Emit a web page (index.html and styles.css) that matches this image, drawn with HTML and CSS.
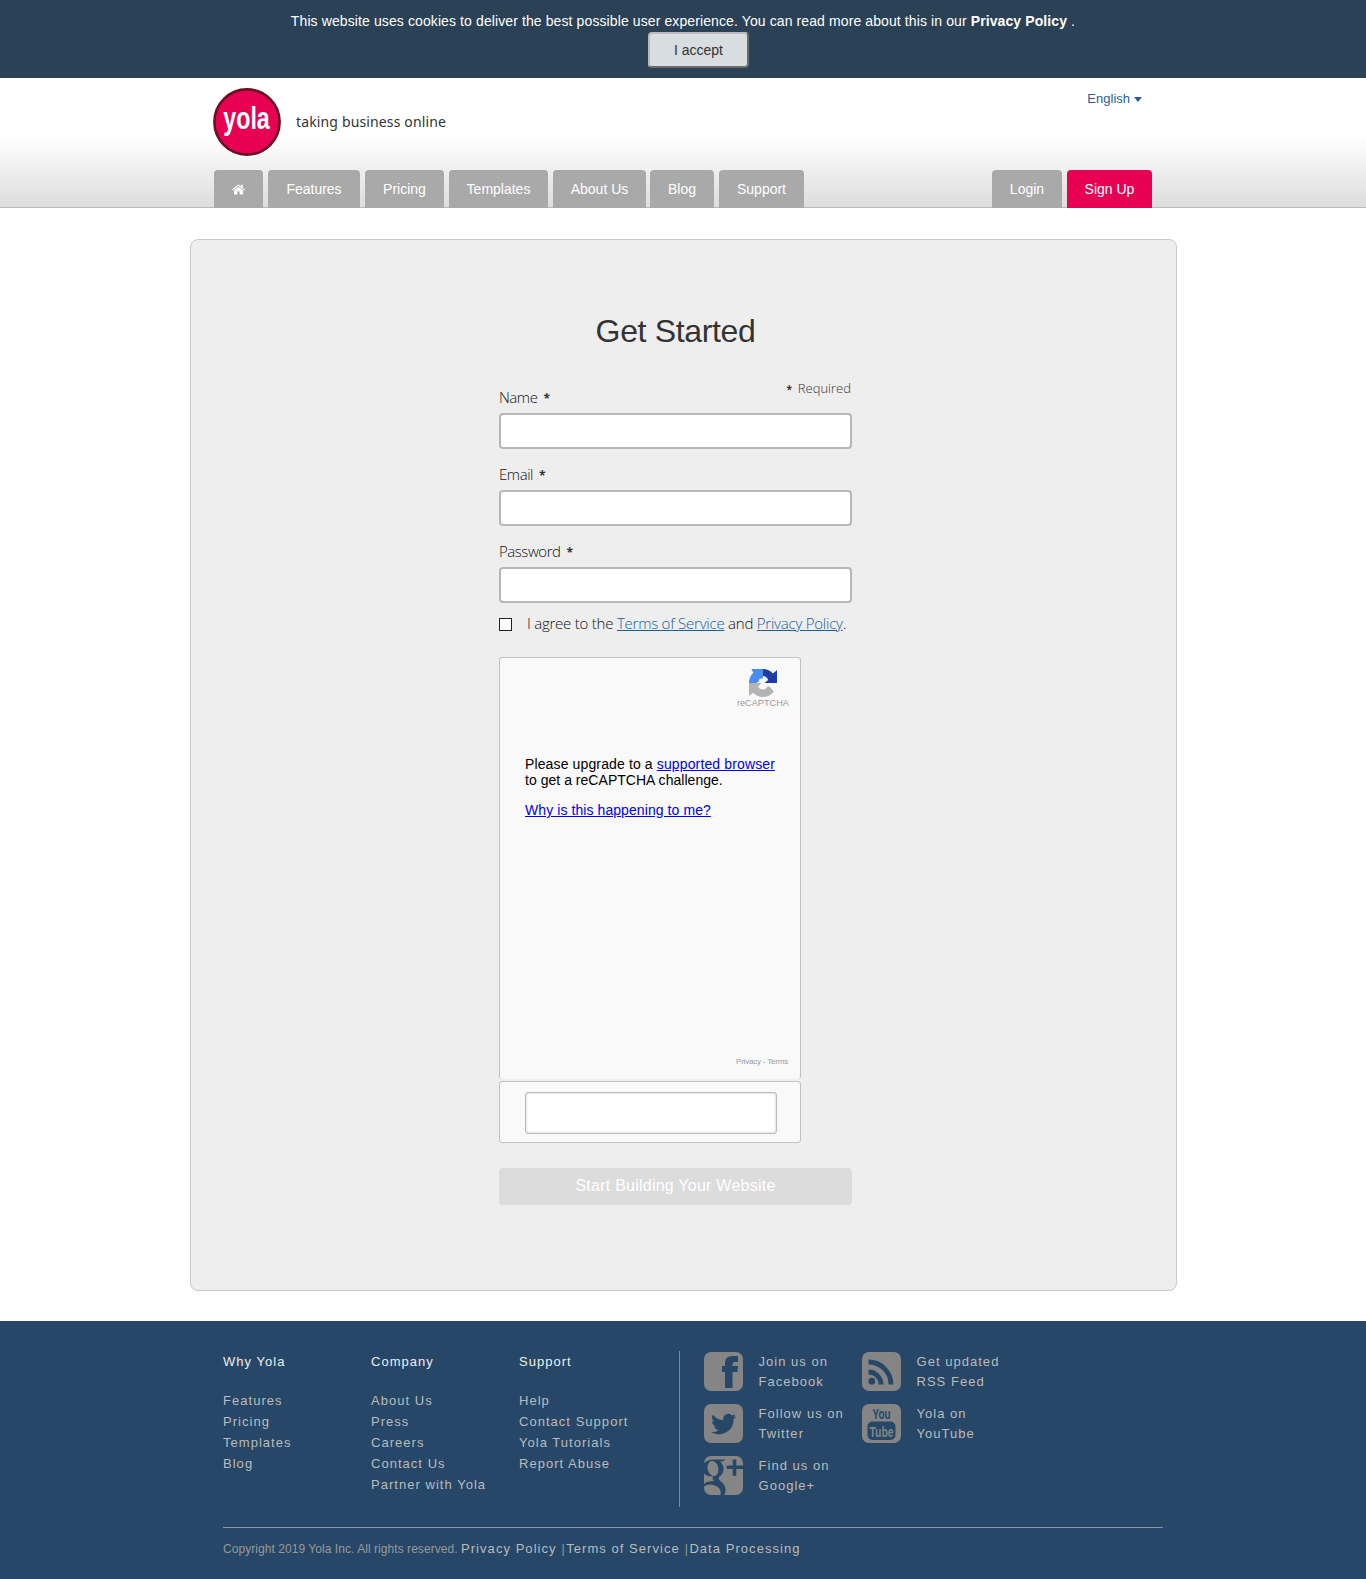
FILE: index.html
```html
<!DOCTYPE html>
<html lang="en">
<head>
<meta charset="utf-8">
<title>Yola - Get Started</title>
<link rel="stylesheet" href="styles.css">
</head>
<body>
<div class="cookie">
  <p>This website uses cookies to deliver the best possible user experience. You can read more about this in our <b>Privacy Policy</b> .</p>
  <button class="accept" type="button">I accept</button>
</div>
<header class="header">
  <div class="header-top">
    <svg class="logo" width="68" height="68" viewBox="0 0 68 68">
      <circle cx="34" cy="34" r="32.6" fill="#e80052" stroke="#6b1024" stroke-width="2.6"/>
      <text class="logo-text" x="10.3" y="41" textLength="46.5" lengthAdjust="spacingAndGlyphs">yola</text>
    </svg>
    <span class="tagline">taking business online</span>
    <span class="language">English <i class="caret"></i></span>
  </div>
  <nav class="tabs">
    <a class="tab home"><svg width="13" height="11" viewBox="0 0 13 11" fill="#fff"><path d="M6.5 2.7 11 6.4V10q0 .6-.6.6H7.7V7.4H5.3v3.2H2.6Q2 10.6 2 10V6.4z"/><path d="M.2 5.600 5.900.8q.6-.5 1.200 0L9 2.400V.8h1.700v3l2.100 1.800-.6.8L6.500 1.700.8 6.400z"/></svg></a>
    <a class="tab w92">Features</a><a class="tab w79">Pricing</a><a class="tab w99">Templates</a><a class="tab w93">About Us</a><a class="tab blog">Blog</a><a class="tab w85">Support</a>
    <a class="tab login">Login</a><a class="tab signup w85">Sign Up</a>
  </nav>
</header>
<main class="panel">
  <form class="form">
    <h1>Get Started</h1>
    <div class="field first">
      <label>Name<b>*</b></label><span class="required"><b>*</b>Required</span>
    </div>
    <input class="input" type="text">
    <div class="field"><label>Email<b>*</b></label></div>
    <input class="input" type="text">
    <div class="field"><label>Password<b>*</b></label></div>
    <input class="input" type="text">
    <div class="agree"><i class="box"></i><span>I agree to the <a>Terms of Service</a> and <a>Privacy Policy</a>.</span></div>
    <div class="captcha">
      <div class="brand">
        <svg width="28" height="28" viewBox="0 0 28 28">
          <path fill="#4a8cf0" d="M14 0v9.2Q11 9.3 9.5 11l1 1.200L7 14H0Q0 8 4.500 3.600L2.800 1.500V0z"/>
          <path fill="#1f3ca6" d="M14 0q6 0 10 4.500L28 1v13H15.500l3.700-3Q17.500 7 14 7z"/>
          <path fill="#b3b3b3" d="M0 14h12.500L9 17.500q1.500 3 5 3 3 0 4.600-3.300L21 18l3.800 4.800Q20.500 28 14 28 8.500 28 4 23.800L0 27z"/>
        </svg>
        <span>reCAPTCHA</span>
      </div>
      <p class="message">Please upgrade to a <a>supported browser</a><br><span class="tight">to get a reCAPTCHA challenge.</span></p>
      <p class="message"><a>Why is this happening to me?</a></p>
      <span class="legal">Privacy - Terms</span>
    </div>
    <div class="response"><input class="response-input" type="text"></div>
    <button class="submit" type="button">Start Building Your Website</button>
  </form>
</main>
<footer class="footer">
  <div class="footer-main">
    <div class="col"><h2>Why Yola</h2><a>Features</a><a>Pricing</a><a>Templates</a><a>Blog</a></div>
    <div class="col"><h2>Company</h2><a>About Us</a><a>Press</a><a>Careers</a><a>Contact Us</a><a>Partner with Yola</a></div>
    <div class="col last"><h2>Support</h2><a>Help</a><a>Contact Support</a><a>Yola Tutorials</a><a>Report Abuse</a></div>
    <div class="social">
      <a><svg width="39" height="39" viewBox="0 0 39 39"><rect width="39" height="39" rx="7" fill="#858585"/><path fill="#264768" d="M21 36V20h-3v-6h3v-3q0-7 7.500-7H34v6h-3.500q-2 0-2 2v2H34l-.6 6h-4.900v16z"/></svg><span>Join us on<br>Facebook</span></a>
      <a><svg width="39" height="39" viewBox="0 0 39 39"><rect width="39" height="39" rx="7" fill="#858585"/><g fill="none" stroke="#264768" stroke-width="4.800"><path d="M6.500 20A12.500 12.500 0 0 1 19 32.500"/><path d="M6.500 10A22.500 22.500 0 0 1 29 32.500"/></g><circle cx="9.800" cy="29.200" r="3.400" fill="#264768"/></svg><span>Get updated<br>RSS Feed</span></a>
      <a><svg width="39" height="39" viewBox="0 0 39 39"><rect width="39" height="39" rx="7" fill="#858585"/><path fill="#264768" transform="translate(7 7.500) scale(1.050)" d="M24 4.600a10 10 0 0 1-2.800.8 5 5 0 0 0 2.100-2.700 10 10 0 0 1-3.100 1.200 4.900 4.900 0 0 0-8.400 4.500A14 14 0 0 1 1.700 3.200a4.900 4.900 0 0 0 1.500 6.500 5 5 0 0 1-2.200-.6 4.900 4.900 0 0 0 3.900 4.900 5 5 0 0 1-2.200.1 4.900 4.900 0 0 0 4.600 3.400A9.900 9.900 0 0 1 0 19.500 14 14 0 0 0 21.500 7.100 10 10 0 0 0 24 4.600z"/></svg><span>Follow us on<br>Twitter</span></a>
      <a><svg width="39" height="39" viewBox="0 0 39 39"><rect width="39" height="39" rx="7" fill="#858585"/><rect x="5.500" y="17.500" width="28" height="18.500" rx="5" fill="#264768"/><text class="yt" x="10.500" y="15" fill="#264768" textLength="18" lengthAdjust="spacingAndGlyphs">You</text><text class="yt" x="7.500" y="32.500" fill="#858585" textLength="24" lengthAdjust="spacingAndGlyphs">Tube</text></svg><span>Yola on<br>YouTube</span></a>
      <a><svg width="39" height="39" viewBox="0 0 39 39"><rect width="39" height="39" rx="7" fill="#858585"/><g fill="#264768"><path d="M28.700 3.500h3.600v6H39v3.400h-6.700v6.800h-3.600v-6.800h-6V9.500h6z"/><path d="M0 7Q4 3.500 10 3.500h11.500L19 5.300h-3q4 4 3.500 8.700-.5 4-4 6.500-2 1.800.5 4 5 4.500 5.500 8 .3 3-1 6.500h-4q1-5-2.500-8-4-3-9-2.500-3 .3-5 2v-2.500q3-3 10-3-2-2-1.200-4.500Q2.500 20.500 0 17.500z"/></g><ellipse cx="9" cy="12.500" rx="5.400" ry="7.700" fill="#858585" transform="rotate(-12 9 12.500)"/></svg><span>Find us on<br>Google+</span></a>
    </div>
  </div>
  <div class="copyright">Copyright 2019 Yola Inc. All rights reserved. <a>Privacy Policy</a> <i>|</i><a>Terms of Service</a> <i>|</i><a>Data Processing</a></div>
</footer>
</body>
</html>
```
FILE: styles.css
```css
* { box-sizing: border-box; }
body { margin: 0; background: #fff; font: 14px "Liberation Sans", Arial, sans-serif; color: #333; }
p, h1, h2 { margin: 0; font-weight: normal; }
i { font-style: normal; }

.cookie { height: 78px; padding-top: 11px; background: #2b4156; color: #fff; display: flex; flex-direction: column; align-items: center; }
.cookie p { line-height: 21px; letter-spacing: .105px; }
.accept { width: 101px; height: 36px; margin-left: 31px; padding: 0; border: 2px solid; border-color: #bbb #6c6c6c #6c6c6c #bbb; border-radius: 4px; background: #d8dde0; color: #333; font: 14px "Liberation Sans", Arial, sans-serif; }

.header { height: 130px; padding: 0 214px; border-bottom: 1px solid #bbb; background: linear-gradient(#fff 45%, #ddd); }
.header-top { height: 92px; display: flex; align-items: flex-start; }
.logo { margin: 10px 0 0 -1px; overflow: visible; }
.logo-text { font: bold 32px "Liberation Sans", Arial, sans-serif; fill: #fff; }
.tagline { margin: 34px 0 0 15px; font: 14px/20px "Noto Sans", sans-serif; letter-spacing: .14px; color: #333; }
.language { margin: 11px 10px 0 auto; font-size: 13px; line-height: 20px; color: #2b5c9c; display: flex; align-items: center; gap: 4px; }
.caret { border: 4px solid transparent; border-top: 5px solid #2b5c9c; border-bottom: 0; }
.tabs { display: flex; gap: 5px; }
.tab { height: 38px; border-radius: 4px 4px 0 0; background: #a9a9a9; color: #fff; line-height: 38px; text-align: center; }
.home { width: 49px; display: flex; align-items: center; justify-content: center; }
.w79 { width: 79px; }
.w85 { width: 85px; }
.w92 { width: 92px; }
.w93 { width: 93px; }
.w99 { width: 99px; }
.blog { width: 64px; margin-left: -1px; }
.login { width: 70px; margin-left: auto; }
.signup { background: #e80052; }

.panel { width: 987px; height: 1052px; margin: 31px 0 30px 190px; padding: 71px 0 0 308px; border: 1px solid #c9c9c9; border-radius: 8px; background: #eee; }
.form { width: 353px; display: flex; flex-direction: column; }
.form h1 { margin-bottom: 1px; font-size: 32px; line-height: 40px; letter-spacing: -.35px; text-align: center; }
.field { height: 41px; padding-top: 15px; display: flex; justify-content: space-between; font: 300 15px/20px "Open Sans", sans-serif; letter-spacing: -.45px; color: #111; }
.field.first { height: 61px; padding-top: 35px; }
.field b { margin-left: 6px; font-size: 12px; font-weight: 700; color: #333; }
.required { margin: -9px 1px 0 0; font-size: 13px; letter-spacing: 0; color: #333; }
.required b { margin-right: 6px; font-size: 10px; }
.input { width: 353px; height: 36px; padding: 0 8px; border: 2px solid #b7b7b7; border-radius: 4px; background: #fff; }
.agree { height: 54px; padding-top: 10px; display: flex; gap: 15px; font: 300 15px/20px "Open Sans", sans-serif; letter-spacing: -.23px; color: #111; white-space: nowrap; }
.agree a { color: #1260a5; text-decoration: underline; }
.box { flex: none; width: 13px; height: 13px; margin-top: 5px; border: 1px solid #222; background: #fff; }
.captcha { width: 302px; height: 422px; padding: 11px 11px 0 25px; border: 1px solid #c1c1c1; border-bottom: 0; border-radius: 3px; background: #f9f9f9; display: flex; flex-direction: column; }
.brand { align-self: flex-end; height: 87px; display: flex; flex-direction: column; align-items: center; color: #999; font-size: 9.200px; line-height: 13px; }
.message { margin-bottom: 14px; line-height: 16px; letter-spacing: .13px; color: #000; }
.message + .message { letter-spacing: .08px; }
.tight { letter-spacing: .03px; }
.captcha a { color: #00e; text-decoration: underline; }
.legal { align-self: flex-end; margin-top: auto; padding: 0 1px 12px 0; font-size: 8px; letter-spacing: -.2px; line-height: 11px; color: #999; }
.response { width: 302px; height: 62px; margin-top: 2px; padding: 10px 25px; border: 1px solid #c1c1c1; border-radius: 3px; background: #f9f9f9; }
.response-input { display: block; width: 252px; height: 42px; border: 1px solid #bbb; border-radius: 3px; background: #fff; box-shadow: inset 0 0 2px #aaa; }
.submit { height: 37px; margin-top: 25px; padding: 0 0 2px; border: 0; border-radius: 4px; background: #dcdcdc; color: #fff; font: 16px "Liberation Sans", Arial, sans-serif; letter-spacing: .24px; }

.footer { height: 258px; padding: 30px 203px 0 223px; background: #264768; color: #bbb; font-size: 13px; letter-spacing: 1.030px; }
.footer-main { height: 177px; display: flex; border-bottom: 1px solid #8d9294; }
.col { width: 148px; display: flex; flex-direction: column; line-height: 21px; white-space: nowrap; }
.col h2 { margin-bottom: 18px; font-size: 13px; color: #eee; }
.col.last { width: 160px; }
.social { height: 156px; padding: 1px 0 0 24px; border-left: 1px solid #888; display: grid; grid-template-columns: 158px 158px; grid-template-rows: repeat(3, 52px); }
.social a { display: flex; gap: 15.500px; line-height: 20px; white-space: nowrap; }
.yt { font: bold 15px "Liberation Sans Narrow", "Liberation Sans", sans-serif; letter-spacing: 0; }
.copyright { margin-top: 11px; line-height: 20px; font-size: 12px; letter-spacing: .055px; color: #999; }
.copyright a { font-size: 13px; letter-spacing: 1.050px; color: #bbb; }
.copyright i { margin-left: 1.500px; margin-right: 1.500px; }
```
